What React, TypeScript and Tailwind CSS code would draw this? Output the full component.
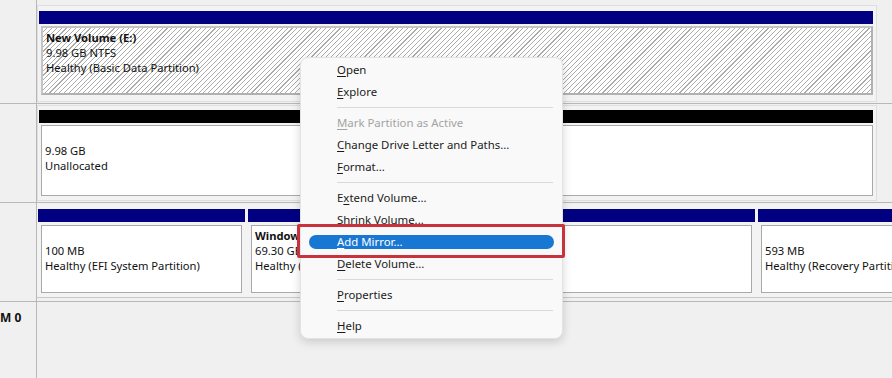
const hatch =
  "bg-[image:repeating-linear-gradient(135deg,#ffffff_0px,#ffffff_2.6px,#acacac_2.6px,#acacac_3.4px)]";

const Label = ({ name, lines }: { name?: string; lines: string[] }) => (
  <div className="pl-[3px] pt-[2px] leading-[15px] whitespace-nowrap">
    <div className="font-bold">{name ?? "\u00a0"}</div>
    {lines.map((l) => (
      <div key={l}>{l}</div>
    ))}
  </div>
);

type Item = { label: string; key: number; disabled?: boolean; active?: boolean } | "sep";

const items: Item[] = [
  { label: "Open", key: 0 },
  { label: "Explore", key: 0 },
  "sep",
  { label: "Mark Partition as Active", key: 0, disabled: true },
  { label: "Change Drive Letter and Paths...", key: 0 },
  { label: "Format...", key: 0 },
  "sep",
  { label: "Extend Volume...", key: 1 },
  { label: "Shrink Volume...", key: 1 },
  { label: "Add Mirror...", key: 0, active: true },
  { label: "Delete Volume...", key: 0 },
  "sep",
  { label: "Properties", key: 0 },
  "sep",
  { label: "Help", key: 0 },
];

const Text = ({ label, k }: { label: string; k: number }) => (
  <span>
    {label.slice(0, k)}
    <span className="underline underline-offset-[2px]">{label[k]}</span>
    {label.slice(k + 1)}
  </span>
);

const ContextMenu = () => (
  <div className="absolute left-[300px] top-[57px] w-[263px] rounded-[8px] border border-[#e3e3e3] bg-[#f9f9f9] py-[1px] text-[11.4px] shadow-[0_3px_10px_rgba(0,0,0,0.16)]">
    {items.map((it, i) =>
      it === "sep" ? (
        <div key={i} className="flex h-[9px] items-center pl-[36px] pr-[9px]">
          <div className="h-px w-full bg-[#dadada]" />
        </div>
      ) : it.active ? (
        <div key={i} className="flex h-[22px] items-center px-[8px]">
          <div className="flex h-[14px] w-full items-center rounded-full bg-[#1877d2] pl-[28px] text-white">
            <Text label={it.label} k={it.key} />
          </div>
        </div>
      ) : (
        <div
          key={i}
          className={`flex h-[22px] items-center pl-[36px] ${it.disabled ? "text-[#a3a3a3]" : "text-[#1b1b1b]"}`}
        >
          <Text label={it.label} k={it.key} />
        </div>
      ),
    )}
  </div>
);

const partitions = [
  { w: "w-[207px]", lines: ["100 MB", "Healthy (EFI System Partition)"] },
  { w: "w-[507px]", name: "Windows (C:)", lines: ["69.30 GB NTFS", "Healthy (Boot, Page File)"] },
  { w: "w-[200px]", lines: ["593 MB", "Healthy (Recovery Partition)"] },
];

export default function App() {
  return (
    <div className="relative h-[378px] w-[892px] overflow-hidden bg-[#f0f0f0] font-['Noto_Sans',sans-serif] text-[11.2px] text-[#111]">
      {/* row 1 - selected volume */}
      <div className="flex h-[104px] border-b border-[#b8b8b8]">
        <div className="w-[37px] shrink-0 border-r border-[#b8b8b8]" />
        <div className="pt-[5px]">
          <div className="h-[97px] w-[840px] border border-[#dedede] bg-[#f3f3f3] pl-px pr-[3px] pt-[5px]">
            <div className="h-[13px] bg-[#000080]" />
            <div className={`ml-[2px] mt-[2px] h-[69px] border-2 border-t-[#c4c4c4] border-l-[#c4c4c4] border-r-[#b0b0b0] border-b-[#b0b0b0] ${hatch}`}>
              <Label name="New Volume  (E:)" lines={["9.98 GB NTFS", "Healthy (Basic Data Partition)"]} />
            </div>
          </div>
        </div>
      </div>

      {/* row 2 - unallocated */}
      <div className="flex h-[99px] border-b border-[#b8b8b8]">
        <div className="w-[37px] shrink-0 border-r border-[#b8b8b8]" />
        <div className="pt-[1px]">
          <div className="h-[96px] w-[840px] border border-[#dedede] bg-[#f3f3f3] pl-px pr-[3px] pt-[4px]">
            <div className="h-[13px] bg-black" />
            <div className="ml-[2px] mt-[2px] h-[71px] border border-[#a9a9a9] bg-white">
              <Label lines={["9.98 GB", "Unallocated"]} />
            </div>
          </div>
        </div>
      </div>

      {/* row 3 - disk 0 */}
      <div className="flex h-[99px] border-b border-[#b8b8b8]">
        <div className="w-[37px] shrink-0 border-r border-[#b8b8b8]" />
        <div className="flex-1 pt-[1px]">
          <div className="flex h-[94px] gap-[3px] border-b border-[#c8c8c8] bg-[#f3f3f3] pl-px pt-[5px]">
            {partitions.map((p) => (
              <div key={p.lines[0]} className={`${p.w} shrink-0`}>
                <div className="h-[13px] bg-[#000080]" />
                <div className="mx-[3px] mt-[3px] h-[68px] overflow-hidden border border-[#a9a9a9] bg-white">
                  <Label name={p.name} lines={p.lines} />
                </div>
              </div>
            ))}
          </div>
        </div>
      </div>

      {/* row 4 - cd-rom */}
      <div className="flex h-[80px]">
        <div className="w-[37px] shrink-0 overflow-hidden border-r border-[#b8b8b8] pt-[8px] text-[12px] font-bold leading-[16px]">
          M 0
        </div>
      </div>

      <ContextMenu />
      <div className="absolute left-[297px] top-[224px] h-[34px] w-[268px] rounded-[2px] border-[3px] border-[#c9323d]" />
    </div>
  );
}
